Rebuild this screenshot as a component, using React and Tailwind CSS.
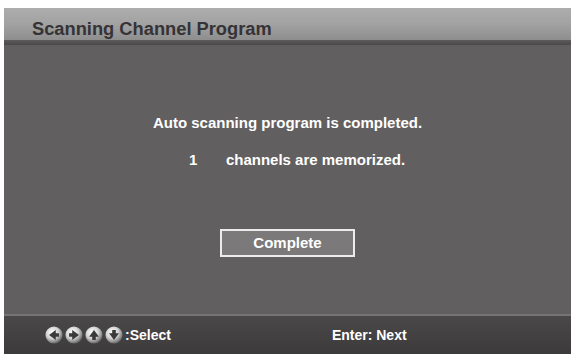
import React from 'react';

const font = { fontFamily: '"Liberation Sans", Arial, sans-serif' };

// round navigation key with an arrow
const NavKey = ({ dir }) => {
  const rot = { left: 0, right: 180, up: 90, down: 270 }[dir];
  const id = `g-${dir}`;
  return (
    <svg width="18" height="18" viewBox="0 0 20 20">
      <defs>
        <radialGradient id={id} cx="40%" cy="35%" r="65%">
          <stop offset="0%" stopColor="#ffffff" />
          <stop offset="55%" stopColor="#d4d4d4" />
          <stop offset="100%" stopColor="#6a6a6a" />
        </radialGradient>
      </defs>
      <circle cx="10" cy="10" r="9.5" fill={`url(#${id})`} />
      <g transform={`rotate(${rot} 10 10)`}>
        <path d="M4.5 10 L12 4.5 L12 8 L15.5 8 L15.5 12 L12 12 L12 15.5 Z" fill="#3a3a3a" />
      </g>
    </svg>
  );
};

export default function App() {
  return (
    <div className="w-[573px] h-[354px] bg-white overflow-hidden" style={font}>
      <div className="ml-[4px] mt-[8px] w-[567px] h-[346px] flex flex-col bg-[#625f60]">
        {/* header */}
        <div className="h-[37px] flex flex-col">
          <div className="flex-1 flex items-center pl-[28px] bg-gradient-to-b from-[#adadad] via-[#a2a2a2] to-[#8e8e8e]">
            <span className="text-[18.3px] font-bold text-[#353335] leading-none pt-[10px]">
              Scanning Channel Program
            </span>
          </div>
          <div className="h-[5px] bg-gradient-to-b from-[#5d5b5c] to-[#4a4849]" />
        </div>

        {/* body */}
        <div className="flex-1 flex flex-col items-center text-white font-bold text-[15px] leading-[22px]">
          <div className="mt-[67px]">Auto scanning program is completed.</div>
          <div className="mt-[15px] flex ml-[19px]">
            <span className="w-[37px]">1</span>
            <span>channels are memorized.</span>
          </div>
          <div className="mt-[58px] w-[135px] h-[28px] border-2 border-[#ececec] bg-[#7b797a] flex items-center justify-center text-[15px] text-white">
            Complete
          </div>
        </div>

        {/* footer */}
        <div className="h-[40px] flex flex-col">
          <div className="h-[2px] bg-[#767475]" />
          <div className="flex-1 flex items-center bg-gradient-to-b from-[#4a4849] to-[#3c3a3b] text-white font-bold text-[14px]">
            <div className="ml-[41px] flex items-center gap-[2px]">
              <NavKey dir="left" />
              <NavKey dir="right" />
              <NavKey dir="up" />
              <NavKey dir="down" />
            </div>
            <span className="ml-[2px]">:Select</span>
            <span className="ml-[161px]">Enter: Next</span>
          </div>
        </div>
      </div>
    </div>
  );
}
